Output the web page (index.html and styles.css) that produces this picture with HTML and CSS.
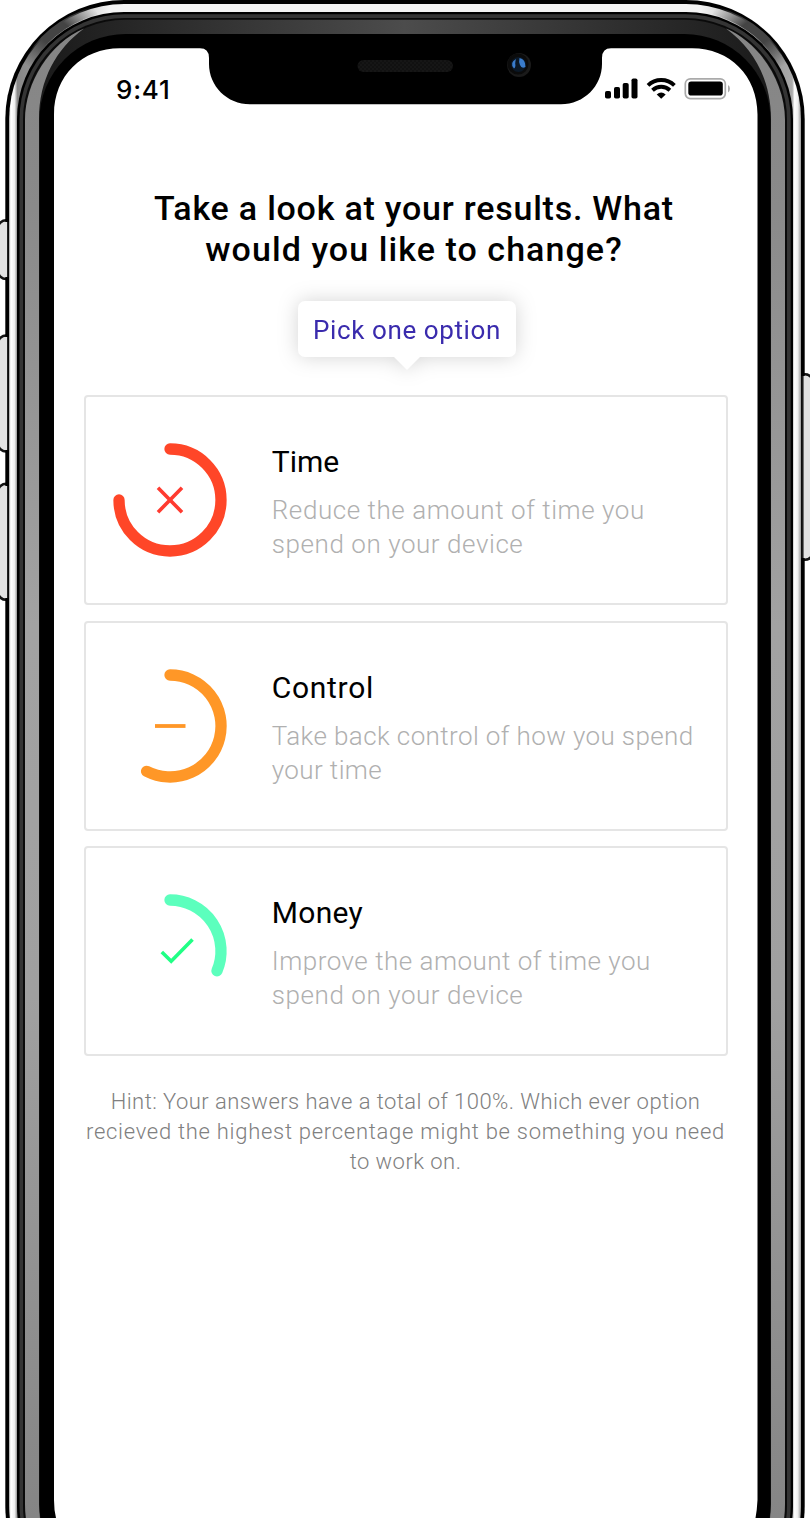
FILE: index.html
```html
<!DOCTYPE html>
<html lang="en">
<head>
<meta charset="utf-8">
<title>Results</title>
<link rel="stylesheet" href="styles.css">
</head>
<body>
<div class="device">
<svg class="frame" width="810" height="1518" viewBox="0 0 810 1518" aria-hidden="true">
  <defs>
    <linearGradient id="steel" gradientUnits="userSpaceOnUse" x1="5" y1="0" x2="805" y2="0">
      <stop offset=".005" stop-color="#ddd"/><stop offset=".008" stop-color="#fff"/><stop offset=".012" stop-color="#eee"/><stop offset=".0155" stop-color="#888"/>
      <stop offset=".05" stop-color="#999"/><stop offset=".13" stop-color="#f3f3f3"/><stop offset=".87" stop-color="#f3f3f3"/><stop offset=".95" stop-color="#999"/><stop offset=".984" stop-color="#aaa"/>
      <stop offset=".987" stop-color="#fff"/><stop offset=".991" stop-color="#eee"/><stop offset=".995" stop-color="#999"/>
    </linearGradient>
    <linearGradient id="topband" x1="0" x2="1" y1="0" y2="0">
      <stop offset="0" stop-color="#181818"/><stop offset=".15" stop-color="#282828"/><stop offset=".5" stop-color="#4c4c4c"/><stop offset=".85" stop-color="#282828"/><stop offset="1" stop-color="#181818"/>
    </linearGradient>
    <linearGradient id="side" gradientUnits="userSpaceOnUse" x1="0" y1="30" x2="0" y2="1518">
      <stop offset="0" stop-color="#858585"/><stop offset=".12" stop-color="#8a8a8a"/><stop offset=".4" stop-color="#a2a2a2"/><stop offset=".65" stop-color="#a0a0a0"/><stop offset="1" stop-color="#858585"/>
    </linearGradient>
    <linearGradient id="shade" x1="0" y1="1" x2="1" y2="0">
      <stop offset="0" stop-color="#333" stop-opacity="0"/><stop offset=".35" stop-color="#444"/><stop offset=".65" stop-color="#444"/><stop offset="1" stop-color="#777" stop-opacity="0"/>
    </linearGradient>
    <pattern id="mesh" width="4" height="4" patternUnits="userSpaceOnUse"><rect width="4" height="4" fill="#111"/><path d="M0 0h2v2H0zM2 2h2v2H2z" fill="#161616"/></pattern>
  </defs>
  <g fill="#e2e2e2" stroke="#151515" stroke-width="2.6">
    <rect x="-2" y="220.3" width="24" height="58.700" rx="8"/>
    <rect x="-2" y="335.500" width="24" height="116" rx="8"/>
    <rect x="-2" y="483.800" width="24" height="116" rx="8"/>
    <rect x="790" y="374.300" width="23" height="185.500" rx="8"/>
  </g>
  <rect x="5.300" y="0" width="799.400" height="1625" rx="119"/>
  <path d="M4.500 222h2.500v55H4.500zM4.500 337h2.500v113H4.500zM4.500 486h2.500v112H4.500zM803.500 376h2v182h-2z" fill="#e2e2e2"/>
  <path d="M7 222h1.300v55H7zM7 337h1.300v113H7zM7 486h1.300v112H7zM801.600 376h1.300v182h-1.300z" fill="#222"/>
  <rect x="9.200" y="4" width="791.800" height="1617" rx="115" fill="url(#steel)"/>
  <g id="corner"><path d="M27 66C39 40 62 21 96 10" fill="none" stroke="url(#shade)" stroke-width="9"/></g>
  <use href="#corner" transform="matrix(-1 0 0 1 810.200 0)"/>
  <rect x="17" y="12" width="776" height="1601" rx="107"/>
  <rect x="19.500" y="14.300" width="771.200" height="1596" rx="105" fill="#343434"/>
  <rect x="23" y="18" width="764" height="1589" rx="101.500" fill="#0a0a0a"/>
  <rect x="25" y="19.800" width="760" height="1585" rx="100" fill="url(#topband)"/>
  <g fill="url(#side)">
    <path d="M25 1504V120C25 82 50 43 84 28.500C56 49 39 80 39 119V1504q1 20 4 40H32q-7-20-7-40z"/>
    <path d="M785 1504V120C785 82 760 43 726 28.500C754 49 771 80 771 119V1504q-1 20-4 40h11q7-20 7-40z"/>
  </g>
  <rect x="39.500" y="34" width="731" height="1557" rx="86"/>
  <path d="M54 1500V114.500C54 76 82 48.300 120 48.300H200Q209 48.300 209 58V64C209 86 227 104.300 250 104.300H561C584 104.300 602 86 602 64V58Q602 48.300 611 48.300H692C730 48.300 757.500 76 757.500 114.500V1500q-.5 10-2 18H56q-2-8-2-18z" fill="#fff"/>
  <rect x="357.500" y="60" width="95.500" height="12" rx="6" fill="url(#mesh)"/>
  <circle cx="519" cy="65" r="12" fill="#1a1a1a"/><circle cx="518" cy="64" r="10.500" fill="#0b0b0b"/><circle cx="518.500" cy="64.500" r="7.500" fill="#0b1826"/>
  <path d="M516 59q-7 4-2 9.500q2-1.500 1.200-5q0-2 .8-4.500zM519.500 58q6 1 6 9q-4 2-5.500-2q-1.500-3-.5-7z" fill="#3a7ccc"/>
</svg>
<div class="screen">
  <div class="status">
    <span class="clock">9:41</span>
    <svg class="signals" width="128" height="26" viewBox="0 0 128 26" aria-hidden="true">
      <rect x="2" y="15" width="6" height="7.500" rx="1.800"/><rect x="11" y="11" width="6" height="11.500" rx="1.800"/><rect x="19.700" y="7" width="6" height="15.500" rx="1.800"/><rect x="28.500" y="2.500" width="6" height="20" rx="1.800"/>
      <g fill="none" stroke="#000" stroke-width="3.900"><path d="M45 9.300a19 19 0 0 1 26.400 0"/><path d="M49.500 14.200a12.800 12.800 0 0 1 17.400 0"/></g>
      <path d="M53.700 18.400q4.500-3.800 9 0L58.200 22.700z"/>
      <rect x="82.300" y="2.800" width="40" height="19.800" rx="5" fill="none" stroke="#aaa" stroke-width="1.700"/><rect x="85.300" y="5.600" width="34.500" height="13.900" rx="2.800"/><path d="M125 9q2 1.200 2 3.700t-2 3.700z" fill="#aaa"/>
    </svg>
  </div>
  <h1 class="title"><span class="line title-first">Take a look at your results. What</span><span class="line title-second">would you like to change?</span></h1>
  <div class="prompt">Pick one option</div>
  <div class="options">
    <section class="card">
      <svg class="ring" width="116" height="116" viewBox="-58 -58 116 116"><path d="M0-51A51 51 0 1 1-51 0" stroke="#ff4628" stroke-width="11.300" stroke-linecap="round"/><path d="M-12-12.200l24 24.400M12-12.200l-24 24.400" stroke="#ff3b30" stroke-width="3.600"/></svg>
      <div class="text"><h2 class="time">Time</h2><p><span class="line wide">Reduce the amount of time you</span><span class="line wide">spend on your device</span></p></div>
    </section>
    <section class="card">
      <svg class="ring" width="116" height="116" viewBox="-58 -58 116 116"><path d="M0-51A51 51 0 1 1-23.400 45.300" stroke="#ff9727" stroke-width="11.300" stroke-linecap="round"/><path d="M-15 0h30.500" stroke="#ff9727" stroke-width="3.800"/></svg>
      <div class="text"><h2 class="control">Control</h2><p><span class="line snug">Take back control of how you spend</span><span class="line snug">your time</span></p></div>
    </section>
    <section class="card">
      <svg class="ring" width="116" height="116" viewBox="-58 -58 116 116"><path d="M0-51A51 51 0 0 1 47 19.800" stroke="#5cffbd" stroke-width="11.300" stroke-linecap="round"/><path d="M-8.200 1L1.200 10.200 22.500-11.500" stroke="#20ff85" stroke-width="3.600"/></svg>
      <div class="text"><h2 class="money">Money</h2><p><span class="line medium">Improve the amount of time you</span><span class="line wide">spend on your device</span></p></div>
    </section>
  </div>
  <p class="hint"><span class="line">Hint: Your answers have a total of 100%. Which ever option</span><span class="line hint-long">recieved the highest percentage might be something you need</span><span class="line">to work on.</span></p>
</div>
</div>
</body>
</html>
```
FILE: styles.css
```css
* { box-sizing: border-box; }
body { margin: 0; background: #fff; color: #000; font-family: Roboto, "Liberation Sans", sans-serif; }
.device { position: relative; width: 810px; height: 1518px; overflow: hidden; }
.frame { position: absolute; inset: 0; }
.screen { position: relative; margin: 0 53px 0 54px; padding: 74px 30px 0; display: flex; flex-direction: column; align-items: center; }
.status { display: flex; align-self: stretch; justify-content: space-between; height: 30px; align-items: center; margin-right: -4px; }
.clock { font: 500 26px/32px Inter, sans-serif; letter-spacing: .8px; margin: 2px 0 0 32px; }
.signals { display: block; }
.line { display: block; white-space: nowrap; }
h1, h2, p { margin: 0; }
.title { margin-top: 84px; margin-left: 17px; font-size: 34px; font-weight: 500; line-height: 41px; text-align: center; }
.title-first { letter-spacing: .77px; }
.title-second { letter-spacing: 1.07px; }
.prompt { position: relative; width: 218px; height: 56px; margin: 31px 0 38px 3px; border-radius: 7px; background: #fff; filter: drop-shadow(0 0 10px rgba(0,0,0,.17)); color: #3a2bad; font-size: 26px; letter-spacing: .6px; line-height: 58px; text-align: center; white-space: nowrap; }
.prompt::after { content: ""; position: absolute; left: 95px; top: 55px; border: 14px solid transparent; border-top-color: #fff; border-bottom: 0; }
.options { display: flex; flex-direction: column; gap: 15.700px; width: 644px; }
.card { display: flex; gap: 44px; height: 210px; padding: 45px 0 0 26.300px; border: 2px solid #e5e5e5; border-radius: 4px; }
.ring { flex: none; fill: none; }
.text { padding-top: 2px; }
h2 { font-size: 30px; font-weight: 400; line-height: 36px; margin-bottom: 13px; }
.control { letter-spacing: .7px; }
.money { letter-spacing: .3px; }
.card p { color: #b0b0b0; font-size: 26px; font-weight: 300; line-height: 34px; }
.wide { letter-spacing: .56px; }
.medium { letter-spacing: .49px; }
.snug { letter-spacing: .39px; }
.hint { margin-top: 31px; color: #808080; font-size: 22px; font-weight: 300; letter-spacing: .45px; line-height: 30px; text-align: center; }
.hint-long { letter-spacing: .72px; }
```
